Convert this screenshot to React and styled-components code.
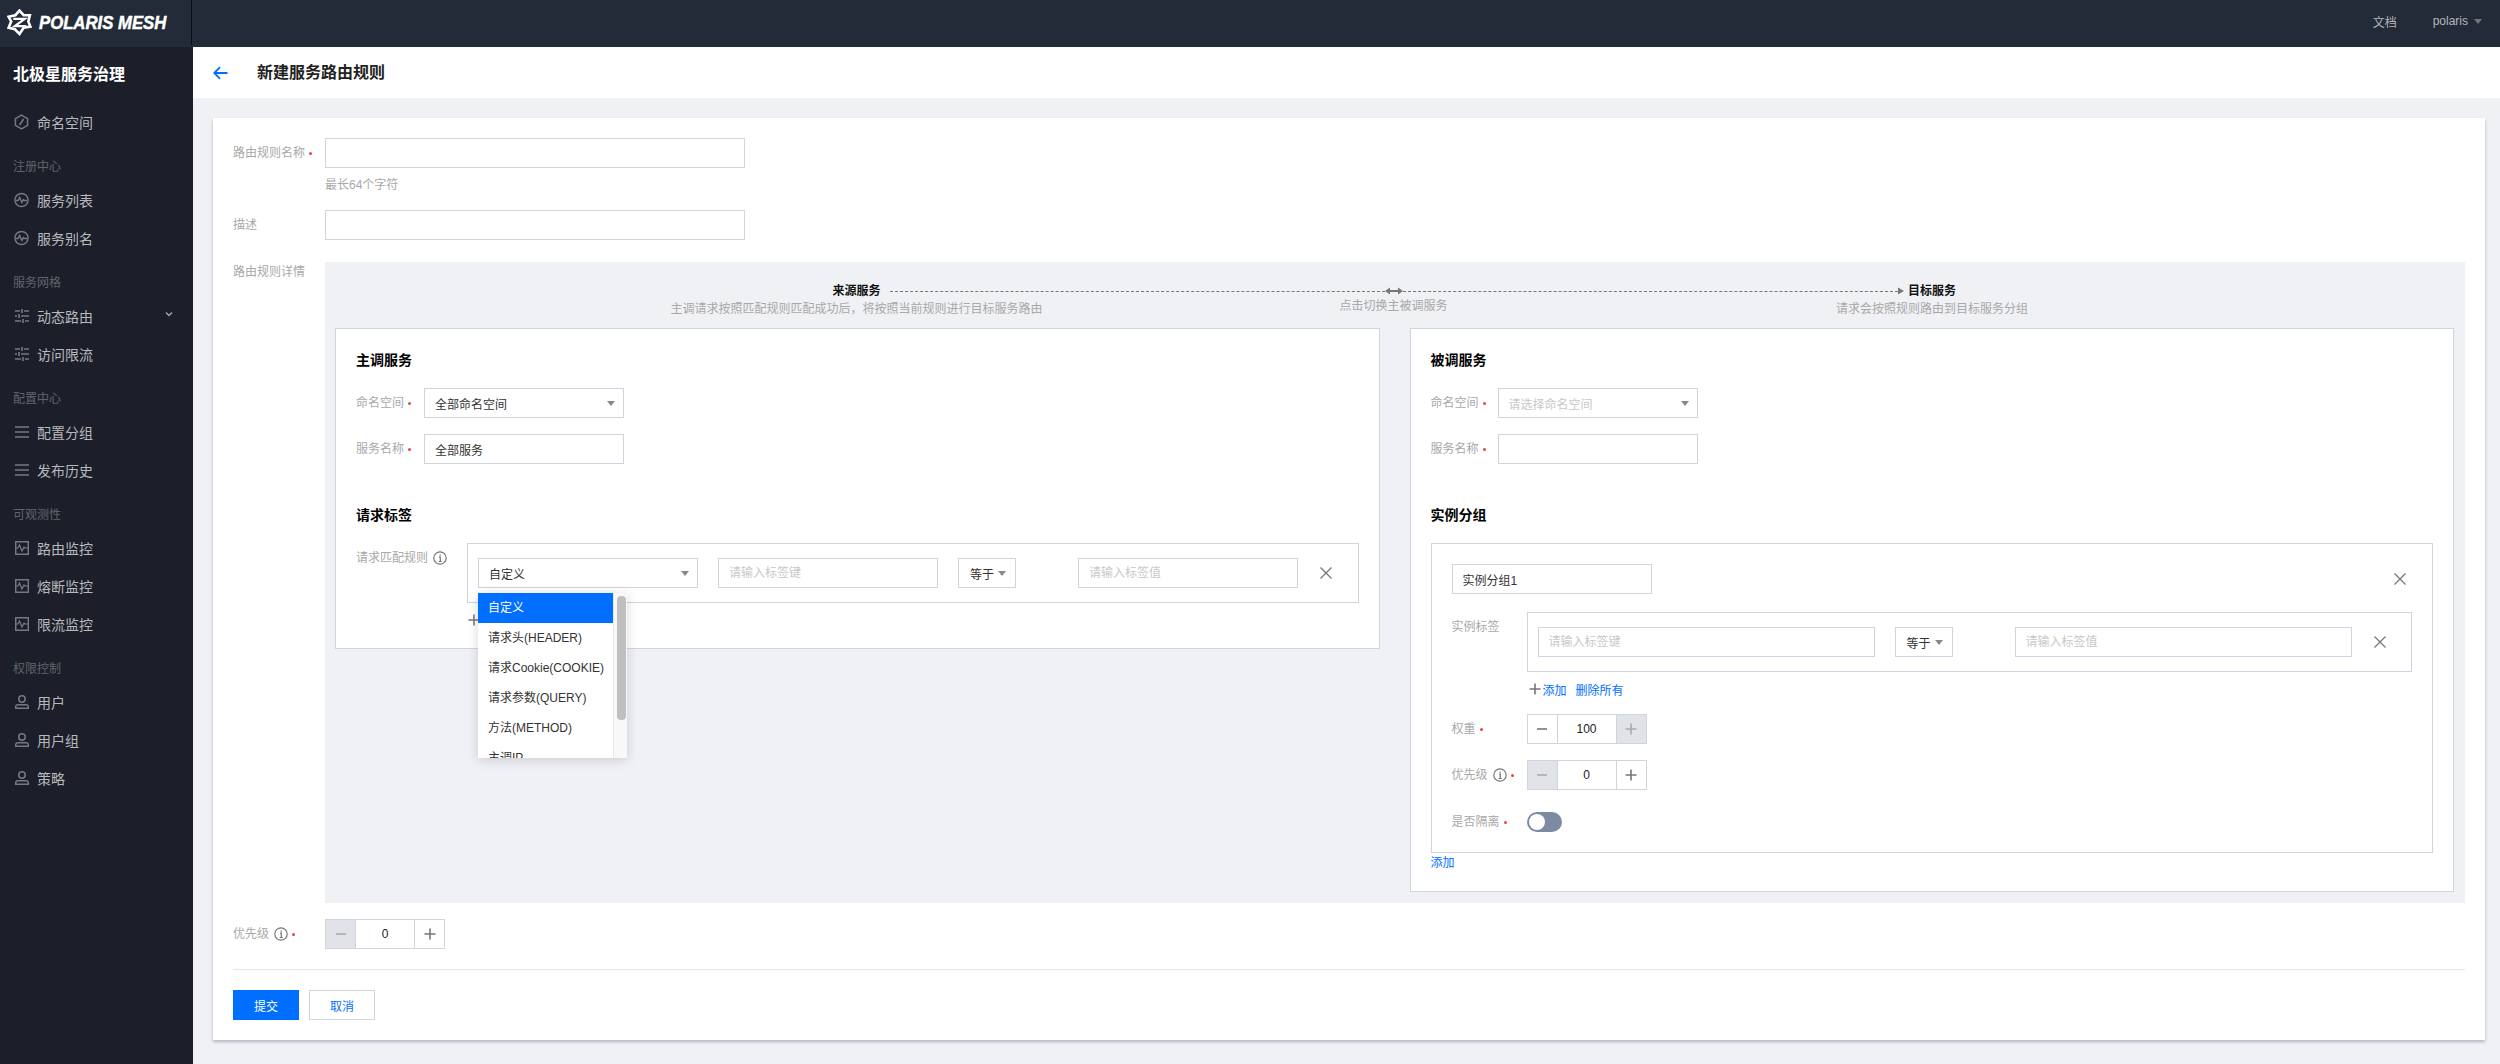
import React from 'react'
import styled, { createGlobalStyle } from 'styled-components'

const FONT = '"Liberation Sans", "Noto Sans CJK SC", sans-serif'

const GlobalStyle = createGlobalStyle`
html, body { margin: 0; padding: 0; height: 100%; overflow: hidden; }
* { box-sizing: border-box; }
body { font-family: ${FONT}; font-size: 12px; color: #333; background: #f0f1f5; }
`

const Page = styled.div`
width: 2500px;
height: 1064px;
display: flex;
flex-direction: column;
overflow: hidden;
`

const TopBar = styled.header`
height: 47px;
flex: none;
display: flex;
align-items: flex-start;
background: #232a38;
`

const LogoArea = styled.div`
width: 192px;
height: 45px;
flex: none;
display: flex;
align-items: center;
gap: 7px;
padding-left: 7px;
border-right: 1px solid #0b0d12;
`

const LogoText = styled.span`
font-family: "Liberation Sans", sans-serif;
font-size: 19px;
font-weight: 700;
font-style: italic;
color: #fff;
white-space: nowrap;
-webkit-text-stroke: 0.5px #fff;
transform: scaleX(0.88);
transform-origin: left center;
`

const TopLinks = styled.div`
margin-left: auto;
height: 42px;
display: flex;
align-items: center;
color: #b4b7bc;
font-size: 12px;
padding-right: 18px;
`

const UserName = styled.span`
margin-left: 36px;
margin-right: 6px;
`

const Caret = styled.i`
display: inline-block;
flex: none;
width: 0;
height: 0;
border-left: 4px solid transparent;
border-right: 4px solid transparent;
border-top: 5px solid ${props => props.$color || '#888'};
`

const Body = styled.div`
flex: 1;
display: flex;
min-height: 0;
`

const Sidebar = styled.nav`
width: 193px;
flex: none;
background: #1c1f2a;
`

const AppTitle = styled.div`
height: 56px;
padding: 20px 0 0 13px;
line-height: 16px;
font-size: 16px;
font-weight: 700;
color: #fff;
`

const GroupLabel = styled.div`
height: 40px;
padding: 17px 0 0 13px;
line-height: 18px;
font-size: 12px;
color: #5f646c;
`

const MenuItem = styled.div`
height: 38px;
display: flex;
align-items: center;
padding-left: 14px;
color: #b7b9bd;
font-size: 14px;
position: relative;
`

const MenuIconSlot = styled.span`
width: 15px;
flex: none;
display: flex;
align-items: center;
justify-content: center;
`

const MenuText = styled.span`
margin-left: 8px;
`

const MenuChevron = styled.svg`
position: absolute;
left: 165px;
top: 13px;
`

const Main = styled.main`
flex: 1;
min-width: 0;
display: flex;
flex-direction: column;
`

const PageHeader = styled.div`
height: 51px;
flex: none;
background: #fff;
display: flex;
align-items: center;
padding-left: 20px;
`

const PageTitle = styled.h2`
margin: 0 0 0 29px;
font-size: 16px;
line-height: 22px;
font-weight: 700;
color: #222;
`

const Content = styled.div`
padding: 20px 15px 0 20px;
`

const Card = styled.section`
height: 922px;
background: #fff;
padding: 20px 20px 0;
box-shadow: 0 2px 3px rgba(54, 58, 80, 0.32);
`

const FormRow = styled.div`
display: flex;
align-items: ${props => props.$top ? 'flex-start' : 'center'};
margin-bottom: ${props => props.$gap ?? 16}px;
`

const FormLabel = styled.label`
width: ${props => props.$width}px;
flex: none;
display: flex;
align-items: center;
line-height: 18px;
padding-top: ${props => props.$pt || 0}px;
color: #a8a8a8;
font-size: 12px;
`

const Star = styled.span`
width: 3px;
height: 3px;
margin-left: 4px;
border-radius: 50%;
background: #e54545;
`

const Field = styled.input`
display: block;
width: ${props => props.$width}px;
height: 30px;
flex: none;
padding: 0 10px;
border: 1px solid #cfd5de;
border-radius: 0;
outline: none;
background: #fff;
color: #333;
font-family: ${FONT};
font-size: 12px;
&::placeholder { color: #c8c8c8; opacity: 1; }
`

const Hint = styled.div`
margin: 8px 0 16px 92px;
line-height: 18px;
color: #a8a8a8;
font-size: 12px;
`

const SelectBox = styled.div`
position: relative;
width: ${props => props.$width}px;
height: 30px;
flex: none;
display: flex;
align-items: center;
justify-content: space-between;
padding: 0 ${props => props.$right || 8}px 0 ${props => props.$left || 10}px;
border: 1px solid #cfd5de;
background: #fff;
color: ${props => props.$placeholder ? '#c8c8c8' : '#333'};
font-size: 12px;
`

const Details = styled.div`
flex: 1;
min-width: 0;
height: 641px;
background: #f0f1f5;
padding: 0 11px 0 10px;
`

const FlowHeader = styled.div`
position: relative;
height: 66px;
display: grid;
grid-template-columns: repeat(3, 537px);
margin: 0 -11px 0 -10px;
padding-left: 263px;
text-align: center;
`

const FlowColumn = styled.div`
padding-top: ${props => props.$pt}px;
padding-left: ${props => props.$shift || 0}px;
`

const FlowTitle = styled.div`
height: 18px;
line-height: 18px;
font-weight: 700;
color: #111;
font-size: 12px;
`

const FlowDesc = styled.div`
line-height: 18px;
color: #a8a8a8;
font-size: 12px;
`

const FlowLine = styled.div`
position: absolute;
left: 565px;
top: 22px;
width: 1014px;
height: 14px;
display: flex;
align-items: center;
`

const Dashes = styled.span`
flex: 1;
border-top: 1px dashed #777;
`

const PanelGrid = styled.div`
display: grid;
grid-template-columns: 1fr 1fr;
gap: 30px;
align-items: start;
`

const Panel = styled.div`
border: 1px solid #cfd5de;
background: #fff;
padding: 21px 20px 19px;
`

const Heading = styled.h3`
margin: 0 0 18px;
height: 20px;
line-height: 20px;
font-size: 14px;
font-weight: 700;
color: #000;
`

const SectionHeading = styled(Heading)`
margin-top: 41px;
`

const RuleBox = styled.div`
flex: 1;
min-width: 0;
height: 60px;
display: flex;
align-items: center;
padding: 0 10px;
border: 1px solid #cfd5de;
`

const RuleGap = styled.div`
width: ${props => props.$w}px;
flex: none;
`

const CloseIcon = styled.svg`
flex: none;
display: block;
`

const AddRow = styled.div`
height: 18px;
margin: 8px 0 ${props => props.$bottom}px ${props => props.$left}px;
display: flex;
align-items: center;
font-size: 12px;
`

const LinkText = styled.span`
color: #006eff;
font-size: 12px;
margin-left: ${props => props.$ml || 0}px;
margin-right: ${props => props.$mr || 0}px;
`

const Group = styled.div`
height: 310px;
border: 1px solid #cfd5de;
padding: 20px 20px 0;
`

const GroupHead = styled.div`
display: flex;
align-items: center;
justify-content: space-between;
margin-bottom: 18px;
padding-right: 6px;
`

const GroupFoot = styled.div`
height: 18px;
line-height: 18px;
margin-top: 1px;
`

const SwitchRow = styled(FormRow)`
margin-top: 22px;
margin-bottom: 0;
`

const Stepper = styled.div`
display: flex;
width: 120px;
height: 30px;
flex: none;
border: 1px solid #cfd5de;
`

const StepButton = styled.div`
width: 29px;
flex: none;
display: flex;
align-items: center;
justify-content: center;
background: ${props => props.$disabled ? '#e1e3e9' : '#fff'};
`

const StepValue = styled.div`
flex: 1;
display: flex;
align-items: center;
justify-content: center;
border-left: 1px solid #cfd5de;
border-right: 1px solid #cfd5de;
color: #222;
font-size: 12px;
`

const Switch = styled.div`
width: 35px;
height: 20px;
flex: none;
padding: 2px;
border-radius: 10px;
background: #7c8aa2;
`

const SwitchKnob = styled.div`
width: 16px;
height: 16px;
border-radius: 50%;
background: #fff;
`

const Dropdown = styled.div`
position: absolute;
left: -1px;
top: 34px;
z-index: 10;
width: 149px;
height: 165px;
display: flex;
overflow: hidden;
background: #fff;
box-shadow: 0 2px 10px rgba(54, 58, 80, 0.2);
`

const DropdownList = styled.div`
width: 135px;
flex: none;
`

const DropdownItem = styled.div`
height: 30px;
line-height: 30px;
padding-left: 10px;
white-space: nowrap;
font-size: 12px;
color: ${props => props.$active ? '#fff' : '#333'};
background: ${props => props.$active ? '#006eff' : '#fff'};
`

const ScrollTrack = styled.div`
flex: 1;
padding: 3px 1px 0 3px;
background: #f8f8f8;
border-left: 1px solid #e8e8e8;
`

const ScrollThumb = styled.div`
height: 124px;
border-radius: 4px;
background: #bfbfbf;
`

const Divider = styled.hr`
margin: 0;
border: 0;
border-top: 1px solid #e3e5ea;
`

const Actions = styled.div`
display: flex;
gap: 10px;
padding-top: 20px;
`

const Button = styled.div`
width: 66px;
height: 30px;
display: flex;
align-items: center;
justify-content: center;
font-size: 12px;
color: ${props => props.$primary ? '#fff' : '#006eff'};
background: ${props => props.$primary ? '#006eff' : '#fff'};
border: 1px solid ${props => props.$primary ? '#006eff' : '#cfd5de'};
`

const LabelInfo = styled.svg`
flex: none;
margin-left: ${props => props.$ml}px;
`

const menuStroke = { fill: 'none', stroke: '#747a82', strokeWidth: 1.5 }

function NamespaceIcon() {
    return (
        <svg width="15" height="16" viewBox="0 0 15 16" {...menuStroke}>
            <path d="M7.5 1.2 13.6 4.6v6.800L7.500 14.800 1.400 11.400V4.600z" />
            <path d="M9.600 5 5.600 11" strokeWidth="1.600" />
        </svg>
    )
}

function PulseIcon() {
    return (
        <svg width="16" height="16" viewBox="0 0 16 16" {...menuStroke}>
            <circle cx="8" cy="8" r="7" />
            <path d="M2 8.500h2.400L6 5.200l2.400 5.400 1.600-3 1 1h3" />
        </svg>
    )
}

function SliderIcon() {
    return (
        <svg width="14" height="14" viewBox="0 0 14 14" {...menuStroke}>
            <path d="M0 2h5M9 2h5M0 7h2M6 7h8M0 12h6M10 12h4" />
            <path d="M7 0v4M4 5v4M8 10v4" strokeWidth="1.600" />
        </svg>
    )
}

function ListIcon() {
    return (
        <svg width="14" height="14" viewBox="0 0 14 14" {...menuStroke}>
            <path d="M0 2h14M0 7h14M0 12h14" />
        </svg>
    )
}

function ChartIcon() {
    return (
        <svg width="14" height="14" viewBox="0 0 14 14" {...menuStroke}>
            <path d="M.700.700h12.600v12.600H.700z" />
            <path d="M1 7h2l1.500-3 2.500 6 2-4 1 1h3" strokeWidth="1.200" />
        </svg>
    )
}

function UserIcon() {
    return (
        <svg width="14" height="14" viewBox="0 0 14 14" {...menuStroke}>
            <circle cx="7" cy="4" r="3.200" />
            <path d="M.700 13.300v-1.500c0-1.200 1-2 2.200-2h8.200c1.200 0 2.200.800 2.200 2v1.500z" />
        </svg>
    )
}

function InfoIcon({ ml = 5 }) {
    return (
        <LabelInfo $ml={ml} width="14" height="14" viewBox="0 0 14 14" fill="none">
            <circle cx="7" cy="7" r="6.200" stroke="#777" strokeWidth="1.200" />
            <path d="M6 6.200h1.300V10.500M5.800 10.500h3" stroke="#777" strokeWidth="1.200" />
            <path d="M6.500 3.400h1.300v1.300H6.500z" fill="#777" />
        </LabelInfo>
    )
}

function CloseX({ size = 12 }) {
    return (
        <CloseIcon width={size} height={size} viewBox="0 0 12 12" stroke="#777" strokeWidth="1.300">
            <path d="M.500.500l11 11M11.500.500l-11 11" />
        </CloseIcon>
    )
}

function PlusMark({ color = '#777' }) {
    return (
        <svg width="12" height="12" viewBox="0 0 12 12" stroke={color} strokeWidth="1.600">
            <path d="M6 .500v11M.500 6h11" />
        </svg>
    )
}

function MinusMark({ color }) {
    return (
        <svg width="12" height="12" viewBox="0 0 12 12" stroke={color} strokeWidth="1.600">
            <path d="M1 6h10" />
        </svg>
    )
}

function LogoMark() {
    return (
        <svg width="25" height="27" viewBox="0 0 24 26" fill="none" stroke="#fff" strokeWidth="2.500" strokeLinejoin="miter">
            <path d="M12 1.500 16 6h6l-1.500 6 2 5-6.500 1-4 6-4.500-4.500L1.500 18 4 12 1.500 7.500 8 6z" />
            <path d="M6 9.500h11L7.500 16.500h11" strokeWidth="2.200" />
        </svg>
    )
}

const MENU = [
    { label: '', items: [{ text: '命名空间', Icon: NamespaceIcon }] },
    { label: '注册中心', items: [{ text: '服务列表', Icon: PulseIcon }, { text: '服务别名', Icon: PulseIcon }] },
    { label: '服务网格', items: [{ text: '动态路由', Icon: SliderIcon, open: true }, { text: '访问限流', Icon: SliderIcon }] },
    { label: '配置中心', items: [{ text: '配置分组', Icon: ListIcon }, { text: '发布历史', Icon: ListIcon }] },
    { label: '可观测性', items: [{ text: '路由监控', Icon: ChartIcon }, { text: '熔断监控', Icon: ChartIcon }, { text: '限流监控', Icon: ChartIcon }] },
    { label: '权限控制', items: [{ text: '用户', Icon: UserIcon }, { text: '用户组', Icon: UserIcon }, { text: '策略', Icon: UserIcon }] },
]

const MATCH_OPTIONS = ['请求头(HEADER)', '请求Cookie(COOKIE)', '请求参数(QUERY)', '方法(METHOD)', '主调IP']

function SideMenu() {
    return (
        <Sidebar>
            <AppTitle>北极星服务治理</AppTitle>
            {MENU.map(group => (
                <div key={group.label}>
                    {group.label && <GroupLabel>{group.label}</GroupLabel>}
                    {group.items.map(({ text, Icon, open }) => (
                        <MenuItem key={text}>
                            <MenuIconSlot><Icon /></MenuIconSlot>
                            <MenuText>{text}</MenuText>
                            {open && (
                                <MenuChevron width="8" height="8" viewBox="0 0 8 8" fill="none" stroke="#a0a3a8" strokeWidth="1.500">
                                    <path d="M1 2.500 4 5.500 7 2.500" />
                                </MenuChevron>
                            )}
                        </MenuItem>
                    ))}
                </div>
            ))}
        </Sidebar>
    )
}

function NumberStepper({ value, minusOff, plusOff }) {
    return (
        <Stepper>
            <StepButton $disabled={minusOff}><MinusMark color={minusOff ? '#aaa' : '#777'} /></StepButton>
            <StepValue>{value}</StepValue>
            <StepButton $disabled={plusOff}><PlusMark color={plusOff ? '#aaa' : '#777'} /></StepButton>
        </Stepper>
    )
}

function AddLinks({ left, bottom }) {
    return (
        <AddRow $left={left} $bottom={bottom}>
            <PlusMark />
            <LinkText $ml={2} $mr={9}>添加</LinkText>
            <LinkText>删除所有</LinkText>
        </AddRow>
    )
}

function MatchDropdown() {
    return (
        <Dropdown>
            <DropdownList>
                <DropdownItem $active>自定义</DropdownItem>
                {MATCH_OPTIONS.map(item => <DropdownItem key={item}>{item}</DropdownItem>)}
            </DropdownList>
            <ScrollTrack><ScrollThumb /></ScrollTrack>
        </Dropdown>
    )
}

function OperatorSelect() {
    return (
        <SelectBox $width={58} $left={11} $right={9}>等于<Caret /></SelectBox>
    )
}

function SourcePanel() {
    return (
        <Panel>
            <Heading>主调服务</Heading>
            <FormRow>
                <FormLabel $width={68}>命名空间<Star /></FormLabel>
                <SelectBox $width={200}>全部命名空间<Caret /></SelectBox>
            </FormRow>
            <FormRow $gap={0}>
                <FormLabel $width={68}>服务名称<Star /></FormLabel>
                <Field $width={200} defaultValue="全部服务" />
            </FormRow>
            <SectionHeading>请求标签</SectionHeading>
            <FormRow $top $gap={0}>
                <FormLabel $width={111} $pt={6}>请求匹配规则<InfoIcon /></FormLabel>
                <RuleBox>
                    <SelectBox $width={220}>自定义<Caret /><MatchDropdown /></SelectBox>
                    <RuleGap $w={20} />
                    <Field $width={220} placeholder="请输入标签键" />
                    <RuleGap $w={20} />
                    <OperatorSelect />
                    <RuleGap $w={62} />
                    <Field $width={220} placeholder="请输入标签值" />
                    <RuleGap $w={22} />
                    <CloseX />
                </RuleBox>
            </FormRow>
            <AddLinks left={112} bottom={0} />
        </Panel>
    )
}

function TargetPanel() {
    return (
        <Panel>
            <Heading>被调服务</Heading>
            <FormRow>
                <FormLabel $width={67}>命名空间<Star /></FormLabel>
                <SelectBox $width={200} $placeholder>请选择命名空间<Caret /></SelectBox>
            </FormRow>
            <FormRow $gap={0}>
                <FormLabel $width={67}>服务名称<Star /></FormLabel>
                <Field $width={200} />
            </FormRow>
            <SectionHeading>实例分组</SectionHeading>
            <Group>
                <GroupHead>
                    <Field $width={200} defaultValue="实例分组1" />
                    <CloseX />
                </GroupHead>
                <FormRow $top $gap={0}>
                    <FormLabel $width={75} $pt={6}>实例标签</FormLabel>
                    <RuleBox>
                        <Field $width={337} placeholder="请输入标签键" />
                        <RuleGap $w={20} />
                        <OperatorSelect />
                        <RuleGap $w={62} />
                        <Field $width={337} placeholder="请输入标签值" />
                        <RuleGap $w={22} />
                        <CloseX />
                    </RuleBox>
                </FormRow>
                <AddLinks left={77} bottom={16} />
                <FormRow>
                    <FormLabel $width={75}>权重<Star /></FormLabel>
                    <NumberStepper value="100" plusOff />
                </FormRow>
                <FormRow $gap={0}>
                    <FormLabel $width={75}>优先级<InfoIcon /><Star /></FormLabel>
                    <NumberStepper value="0" minusOff />
                </FormRow>
                <SwitchRow>
                    <FormLabel $width={75}>是否隔离<Star /></FormLabel>
                    <Switch><SwitchKnob /></Switch>
                </SwitchRow>
            </Group>
            <GroupFoot><LinkText>添加</LinkText></GroupFoot>
        </Panel>
    )
}

function FlowLegend() {
    return (
        <FlowHeader>
            <FlowColumn $pt={20}>
                <FlowTitle>来源服务</FlowTitle>
                <FlowDesc>主调请求按照匹配规则匹配成功后，将按照当前规则进行目标服务路由</FlowDesc>
            </FlowColumn>
            <FlowColumn $pt={35}>
                <FlowDesc>点击切换主被调服务</FlowDesc>
            </FlowColumn>
            <FlowColumn $pt={20} $shift={3}>
                <FlowTitle>目标服务</FlowTitle>
                <FlowDesc>请求会按照规则路由到目标服务分组</FlowDesc>
            </FlowColumn>
            <FlowLine>
                <Dashes />
                <svg width="18" height="8" viewBox="0 0 18 8" fill="#777">
                    <path d="M0 4 5 .500v2.500h8V.500L18 4l-5 3.500V5H5v2.500z" />
                </svg>
                <Dashes />
                <svg width="6" height="8" viewBox="0 0 6 8" fill="#777">
                    <path d="M0 .500 6 4 0 7.500z" />
                </svg>
            </FlowLine>
        </FlowHeader>
    )
}

export default function App() {
    return (
        <Page>
            <GlobalStyle />
            <TopBar>
                <LogoArea>
                    <LogoMark />
                    <LogoText>POLARIS MESH</LogoText>
                </LogoArea>
                <TopLinks>
                    <span>文档</span>
                    <UserName>polaris</UserName>
                    <Caret $color="#777" />
                </TopLinks>
            </TopBar>
            <Body>
                <SideMenu />
                <Main>
                    <PageHeader>
                        <svg width="15" height="14" viewBox="0 0 15 14" fill="none" stroke="#006eff" strokeWidth="1.800">
                            <path d="M14.500 7H1.500M7 1.200 1.300 7 7 12.800" />
                        </svg>
                        <PageTitle>新建服务路由规则</PageTitle>
                    </PageHeader>
                    <Content>
                        <Card>
                            <FormRow $gap={0}>
                                <FormLabel $width={92}>路由规则名称<Star /></FormLabel>
                                <Field $width={420} />
                            </FormRow>
                            <Hint>最长64个字符</Hint>
                            <FormRow $gap={22}>
                                <FormLabel $width={92}>描述</FormLabel>
                                <Field $width={420} />
                            </FormRow>
                            <FormRow $top>
                                <FormLabel $width={92} $pt={1}>路由规则详情</FormLabel>
                                <Details>
                                    <FlowLegend />
                                    <PanelGrid>
                                        <SourcePanel />
                                        <TargetPanel />
                                    </PanelGrid>
                                </Details>
                            </FormRow>
                            <FormRow $gap={20}>
                                <FormLabel $width={92}>优先级<InfoIcon /><Star /></FormLabel>
                                <NumberStepper value="0" minusOff />
                            </FormRow>
                            <Divider />
                            <Actions>
                                <Button $primary>提交</Button>
                                <Button>取消</Button>
                            </Actions>
                        </Card>
                    </Content>
                </Main>
            </Body>
        </Page>
    )
}
